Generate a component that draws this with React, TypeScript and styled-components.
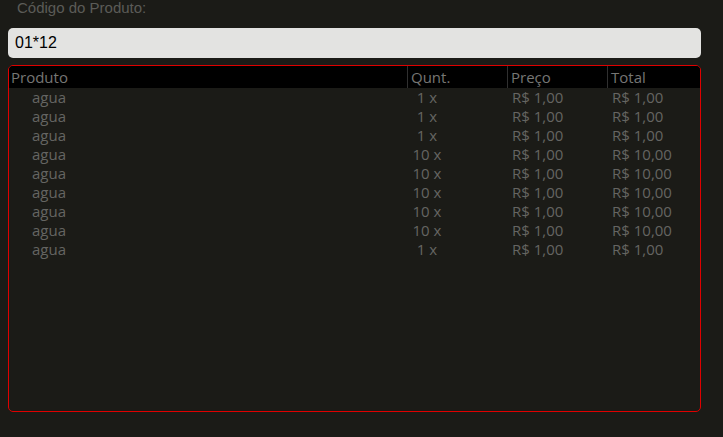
import React from 'react';
import styled, { createGlobalStyle } from 'styled-components';

const GlobalStyle = createGlobalStyle`
  html, body {
    margin: 0;
    padding: 0;
    background: #1b1b17;
  }
  body {
    font-family: "Liberation Sans", Arial, sans-serif;
  }
`;

const Page = styled.div`
  display: flex;
  flex-direction: column;
  padding: 0 22px 0 8px;
  height: 437px;
  box-sizing: border-box;
`;

const Label = styled.label`
  display: block;
  margin: -1px 0 0 9px;
  height: 17px;
  line-height: 17px;
  font-size: 15px;
  color: #5b5b58;
`;

const CodeInput = styled.input`
  margin-top: 12px;
  height: 30px;
  box-sizing: border-box;
  border: none;
  border-radius: 5px;
  background: #e3e3e1;
  padding: 0 7px;
  font-family: "Liberation Sans", Arial, sans-serif;
  font-size: 16px;
  color: #000;
  outline: none;
`;

const TableBox = styled.div`
  margin-top: 7px;
  height: 347px;
  box-sizing: border-box;
  border: 1px solid #e00000;
  border-radius: 5px;
  overflow: hidden;
  font-family: "Open Sans", sans-serif;
  font-size: 15px;
`;

const Row = styled.div<{ $head?: boolean }>`
  display: grid;
  grid-template-columns: 398px 100px 100px 1fr;
  height: ${p => (p.$head ? '22px' : '19px')};
  line-height: ${p => (p.$head ? '22px' : '19px')};
  background: ${p => (p.$head ? '#000' : 'transparent')};
  color: ${p => (p.$head ? '#767674' : '#656562')};
`;

const HeadCell = styled.div<{ $sep?: boolean }>`
  padding-left: ${p => (p.$sep ? '3px' : '2px')};
  border-left: ${p => (p.$sep ? '1px solid #303030' : 'none')};
`;

const NameCell = styled.div`
  padding-left: 23px;
`;

const QtyCell = styled.div`
  width: 40px;
  text-align: center;
`;

const MoneyCell = styled.div`
  padding-left: 5px;
`;

const items = [
  { qty: 1, price: 1 },
  { qty: 1, price: 1 },
  { qty: 1, price: 1 },
  { qty: 10, price: 1 },
  { qty: 10, price: 1 },
  { qty: 10, price: 1 },
  { qty: 10, price: 1 },
  { qty: 10, price: 1 },
  { qty: 1, price: 1 },
];

const money = (v: number) => `R$ ${v.toFixed(2).replace('.', ',')}`;

export default function App() {
  return (
    <Page>
      <GlobalStyle />
      <Label>Código do Produto:</Label>
      <CodeInput defaultValue="01*12" />
      <TableBox>
        <Row $head>
          <HeadCell>Produto</HeadCell>
          <HeadCell $sep>Qunt.</HeadCell>
          <HeadCell $sep>Preço</HeadCell>
          <HeadCell $sep>Total</HeadCell>
        </Row>
        {items.map((it, i) => (
          <Row key={i}>
            <NameCell>agua</NameCell>
            <QtyCell>{it.qty} x</QtyCell>
            <MoneyCell>{money(it.price)}</MoneyCell>
            <MoneyCell>{money(it.qty * it.price)}</MoneyCell>
          </Row>
        ))}
      </TableBox>
    </Page>
  );
}
